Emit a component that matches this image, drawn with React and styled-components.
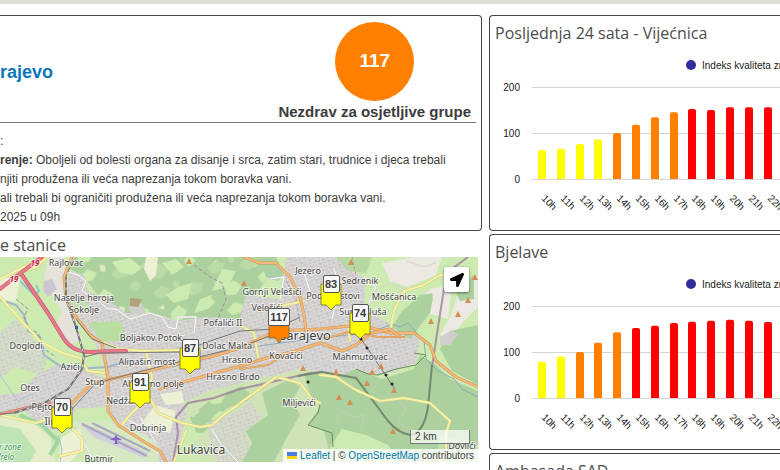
import React from 'react';
import styled, { createGlobalStyle } from 'styled-components';
import { FaLocationArrow } from 'react-icons/fa';

const GlobalStyle = createGlobalStyle`
    * {
        box-sizing: border-box;
    }

    body {
        margin: 0;
        background: white;
        color: #3c3c3c;
        font-family: 'Liberation Sans', Arial, sans-serif;
        overflow: hidden;
    }
`;

const Page = styled.div`
    height: 100vh;
    overflow: hidden;
`;

const TopStrip = styled.header`
    height: 4px;
    background-color: #e0e0d8;
`;

const Columns = styled.main`
    display: grid;
    grid-template-columns: minmax(0, 482fr) minmax(0, 291fr);
    column-gap: 7px;
    margin-top: 11px;
`;

const Column = styled.div`
    display: flex;
    flex-flow: column nowrap;
    gap: 3px;
`;

const Card = styled.section`
    min-height: 216px;
    border: 1px solid #444;
    overflow: hidden;
    border-radius: ${props => props.$side === 'left' ? '0 4px 4px 0' : '4px 0 0 4px'};
    ${props => props.$side === 'left' ? 'border-left: none;' : 'border-right: none;'}
`;

const CardTitle = styled.h2`
    margin: 0;
    padding-left: 5px;
    font-family: 'Open Sans', 'Noto Sans', sans-serif;
    font-size: 16px;
    font-weight: 400;
    line-height: 34px;
    color: #4c4c4c;
    white-space: nowrap;
`;

const Summary = styled.div`
    display: flex;
    justify-content: space-between;
    align-items: center;
    height: 107px;
    margin-right: 5px;
    padding: 6px 5px 0 0;
    border-bottom: 1px solid #777;
`;

const City = styled.h1`
    margin: 0;
    font-size: 18px;
    line-height: 20px;
    color: #0a76bd;
`;

const Rating = styled.div`
    display: flex;
    flex-flow: column nowrap;
    align-items: center;
    font-size: 15px;
    font-weight: bold;
    line-height: 22px;
`;

const IndexCircle = styled.div`
    display: flex;
    justify-content: center;
    align-items: center;
    width: 79px;
    height: 79px;
    border-radius: 50%;
    background-color: #ff8000;
    color: white;
    font-size: 19px;
`;

const Advice = styled.div`
    padding-top: 9px;
    font-size: 12px;
    line-height: 19px;
    white-space: nowrap;

    p {
        margin: 0;
    }
`;

const Stations = styled.section`
    margin-right: 4px;
`;

const StationsTitle = styled(CardTitle)`
    padding-left: 0;
    line-height: 23px;
`;

const MapBox = styled.div`
    position: relative;
    height: 205px;
    overflow: hidden;
    background-color: #c9e6b0;
`;

const MapDrawing = styled.svg`
    display: block;
    width: 100%;
    height: 100%;

    text {
        font-family: 'Noto Sans', sans-serif;
        font-size: 9px;
        fill: #444;
        stroke: rgba(255, 255, 255, 0.6);
        stroke-width: 2px;
        paint-order: stroke;
        text-anchor: middle;
    }

    .town {
        font-size: 10px;
    }

    .city {
        font-size: 12px;
    }

    .capital {
        font-size: 13px;
    }

    .shield {
        font-size: 8px;
        font-style: italic;
        font-weight: bold;
        fill: #c2304e;
    }

    .reserve {
        font-size: 8px;
        font-style: italic;
        fill: #3b9650;
    }
`;

const Pin = styled.button`
    position: absolute;
    left: ${props => props.$x}px;
    top: ${props => props.$y}px;
    display: flex;
    justify-content: center;
    align-items: flex-start;
    width: 24px;
    height: 36px;
    margin: -36px 0 0 -12px;
    padding: 0;
    border: none;
    background: none;
    cursor: pointer;

    svg {
        position: absolute;
        left: 1px;
        bottom: 0;
    }

    span {
        position: relative;
        min-width: 17px;
        height: 18px;
        padding: 0 1px;
        border: 1px solid #555;
        border-radius: 2px;
        background-color: #f8f8f8;
        color: #3c3c3c;
        font: bold 11px/16px 'Liberation Sans', Arial, sans-serif;
    }
`;

const LocateButton = styled.button`
    position: absolute;
    top: 10px;
    right: 9px;
    display: flex;
    justify-content: center;
    align-items: center;
    width: 25px;
    height: 25px;
    padding: 0;
    border: none;
    border-radius: 2px;
    background-color: white;
    box-shadow: 0 1px 3px rgba(0, 0, 0, 0.5);
    color: black;
    font-size: 14px;
`;

const Scale = styled.div`
    position: absolute;
    right: 8px;
    bottom: 18px;
    width: 60px;
    height: 14px;
    padding-left: 4px;
    border: 1px solid #777;
    border-top: none;
    background-color: rgba(255, 255, 255, 0.7);
    font-size: 10px;
    line-height: 13px;
`;

const Attribution = styled.div`
    position: absolute;
    right: 0;
    bottom: 0;
    padding: 0 4px;
    background-color: rgba(255, 255, 255, 0.8);
    font-size: 10px;
    line-height: 13px;
    white-space: nowrap;

    a {
        color: #0078a8;
        text-decoration: none;
    }
`;

const ChartDrawing = styled.svg`
    display: block;
    width: 340px;
    height: 178px;

    text {
        font-family: 'Liberation Sans', Arial, sans-serif;
        font-size: 10px;
        fill: #222;
    }
`;

const HOURS = ['10h', '11h', '12h', '13h', '14h', '15h', '16h', '17h', '18h', '19h', '20h', '21h', '22h'];

const charts = [
    { title: 'Posljednja 24 sata - Vijećnica', values: [63, 66, 76, 86, 100, 118, 134, 145, 152, 150, 156, 156, 156] },
    { title: 'Bjelave', values: [79, 90, 100, 120, 143, 152, 157, 163, 166, 168, 170, 168, 165] },
    { title: 'Ambasada SAD', values: [] },
];

const stations = [
    { x: 62, y: 177, value: 70 },
    { x: 140, y: 152, value: 91 },
    { x: 190, y: 118, value: 87 },
    { x: 279, y: 87, value: 117 },
    { x: 331, y: 54, value: 83 },
    { x: 360, y: 83, value: 74 },
];

const labels = [
    [66, 9, 'Rajlovac'],
    [84, 44, 'Naselje heroja'],
    [84, 56, 'Sokolje'],
    [26, 92, 'Doglodi'],
    [151, 84, 'Boljakov Potok'],
    [70, 113, 'Azići'],
    [147, 108, 'Alipašin most'],
    [95, 128, 'Stup'],
    [30, 134, 'Otes'],
    [153, 130, 'Alipašino polje'],
    [45, 153, 'Pejton'],
    [57, 168, 'Ilidža', 'town'],
    [126, 147, 'Nedžarići'],
    [148, 174, 'Dobrinja'],
    [99, 205, 'Butmir'],
    [201, 197, 'Lukavica', 'city'],
    [223, 69, 'Pofalići II'],
    [227, 92, 'Dolac Malta'],
    [237, 106, 'Hrasno'],
    [233, 123, 'Hrasno Brdo'],
    [272, 38, 'Gornji Velešići'],
    [267, 54, 'Velešići'],
    [308, 17, 'Jezero'],
    [360, 27, 'Sedrenik'],
    [333, 42, 'Pod Hrastovi'],
    [394, 43, 'Mošćanica'],
    [363, 58, 'Sumbuluša'],
    [305, 83, 'Sarajevo', 'capital'],
    [286, 102, 'Kovačići'],
    [360, 103, 'Mahmutovac'],
    [299, 149, 'Miljevići'],
    [462, 192, 'Dovlići'],
    [35, 9, '19', 'shield'],
    [14, 25, '19', 'shield'],
    [8, 193, 'er zone', 'reserve'],
    [5, 203, 'Vrelo', 'reserve'],
];

const peaks = [
    [189, 4], [244, 26], [351, 5], [431, 64], [458, 57], [468, 43], [475, 20],
    [303, 111], [336, 115], [372, 115], [381, 109], [367, 126], [394, 133],
    [339, 140], [350, 145], [393, 174],
];

function barColor(value) {
    if (value < 100) return '#ffff00';
    if (value < 150) return '#ff8000';
    return '#ff0000';
}

const Road = ({ d, color, edge, width }) => (
    <g fill="none" strokeLinejoin="round" strokeLinecap="round">
        <path d={d} stroke={edge} strokeWidth={width + 1} />
        <path d={d} stroke={color} strokeWidth={width} />
    </g>
);

const primary = { color: '#f2b97a', edge: '#d4924f', width: 2 };
const secondary = { color: '#f4f3a8', edge: '#d3cd86', width: 2 };
const motorway = { color: '#e5798c', edge: '#c84f6b', width: 3 };
const minor = { color: '#ffffff', edge: '#cfcfcf', width: 1 };

const CityMap = () => (
    <MapDrawing viewBox="0 0 478 205" preserveAspectRatio="xMinYMin slice" role="img" aria-label="Sarajevo">
        <defs>
            <pattern id="streets" width="9" height="7" patternUnits="userSpaceOnUse" patternTransform="rotate(-18)">
                <rect width="9" height="7" fill="#cfcccb" />
                <path d="M0 2H9M0 6L4 5L9 6M3 0V5M7 2V7" stroke="#dedcdb" fill="none" />
                <path d="M1 4h1M5 4h1M5 1h2" stroke="#bfb9b7" fill="none" />
            </pattern>
            <pattern id="woods" width="60" height="46" patternUnits="userSpaceOnUse" patternTransform="rotate(-25)">
                <rect width="60" height="46" fill="#add19e" />
                <path d="M3 6L14 2L21 9L15 14L6 13ZM33 17L44 12L53 18L48 25L38 24ZM11 31L21 27L27 36L18 42L9 38ZM45 35L53 32L56 40L47 43Z" fill="#cdebb0" />
                <path d="M27 3L32 6L29 12L25 9ZM2 22L8 20L7 25Z" fill="#dfe9c0" />
            </pattern>
        </defs>

        {/* land cover */}
        <rect width="478" height="205" fill="#cdebb0" />
        <path d="M74 0H260L270 18L252 42L244 62L205 64L180 72L158 60L132 62L110 48L96 36L84 20L70 12Z" fill="url(#woods)" />
        <path d="M100 0H160L190 20L225 0H262L245 22L214 28L196 48L168 44L140 48L118 30Z" fill="#add19e" opacity="0.6" />
        <path d="M112 5L130 1L142 11L132 18L119 15ZM178 30L192 26L188 42L174 46L166 38ZM222 12L236 14L228 30L212 34ZM200 42L212 38L208 52L194 56ZM162 6L176 2L184 10L172 18Z" fill="#cdebb0" />
        <path d="M146 0H158L156 18L150 24L144 12Z" fill="#eef0d5" />
        <path d="M128 50L140 44L146 54L136 62Z" fill="#cfcecc" />
        <path d="M130 41L142 42L138 50L130 49Z" fill="#b3a17b" />
        <path d="M48 0H64L66 30L72 60L82 82L70 88L56 68L62 55L44 22Z" fill="#e5e2dc" />
        <path d="M44 24L52 22L57 32L48 40L43 33Z" fill="#cbc7d2" />
        <path d="M0 20L20 22L16 45L0 42Z" fill="#eef0d5" />
        <path d="M0 75L16 62L30 78L48 100L42 118L16 110L0 122Z" fill="url(#streets)" opacity="0.7" />
        <path d="M36 118L58 107L85 110L105 122L106 150L76 152L60 175L38 168L22 150L0 156V138L20 136Z" fill="url(#streets)" />
        <path d="M70 14L84 18L88 34L106 42L126 56L160 58L178 64L206 60L240 62L246 38L282 42L286 0H336L352 14L366 22L364 50L388 66L420 82L416 106L394 115L362 120L338 116L300 112L250 126L210 141L186 160L176 205H158L150 190L122 176L108 150L104 108L96 88L82 66L70 52L66 32Z" fill="url(#streets)" />
        <path d="M68 42L82 40L92 52L84 58L72 54Z" fill="#c3dfae" opacity="0.8" />
        <path d="M88 66L120 64L128 84L102 84Z" fill="#b8dfa0" />
        <path d="M258 0H276L284 18L278 24L266 20Z" fill="#abd0a5" />
        <path d="M110 164L146 178L160 190L158 205H100L82 190L70 178L74 164Z" fill="#d7e9c2" />
        <path d="M78 164L98 172L148 196L144 201L94 180Z" fill="#d0cfdd" />
        <path d="M82 167L147 199M92 166L150 194" stroke="#aaa7be" strokeWidth="2" />
        <path d="M62 180L80 171L84 190L70 205H58Z" fill="#eef0d5" />
        <path d="M0 160L28 162L50 180L55 205H0Z" fill="#e4edc9" />
        <path d="M0 168L20 172L36 194L30 205H0Z" fill="#bee4b5" />
        <path d="M20 158L42 168L58 184L50 198" fill="none" stroke="#94d0a0" strokeWidth="4" opacity="0.8" />
        <path d="M155 148L176 154L170 176L140 168ZM160 137L182 134L184 146L166 148Z" fill="#eef0d5" />
        <path d="M182 146L208 134L246 125L300 112L340 118L330 150L320 172L346 188L330 205H205L194 186L214 162L190 166Z" fill="#cfe3b6" />
        <path d="M190 160L214 140L250 126L248 144L226 152L210 170L198 180Z" fill="url(#woods)" />
        <path d="M206 166L238 154L250 144L262 162L246 176L250 192L240 205H218L212 190Z" fill="url(#streets)" opacity="0.7" />
        <path d="M262 136L290 122L300 130L292 144L300 158L286 182L274 205H242L252 186L246 174L268 158Z" fill="#add19e" />
        <path d="M304 116L340 119L356 112L382 122L414 112L420 98L436 108L450 122L478 134V190L440 205H332L324 174L308 168L320 150L310 138Z" fill="#add19e" />
        <path d="M342 172L366 178L388 188L398 205H334L330 190Z" fill="#cdebb0" />
        <path d="M440 178L478 188V205H436Z" fill="#c1deb0" />
        <path d="M382 6L414 0H442L436 18L408 30L390 24ZM430 32L452 28L448 62L428 56L416 64L402 56Z" fill="#ece9e2" />
        <path d="M462 22L478 18V50L464 64L448 84L440 78L452 56Z" fill="#ece9e2" />
        <path d="M336 0H372L366 16L348 14Z" fill="#add19e" opacity="0.7" />
        <path d="M402 54L420 38L434 36L430 56L410 82L392 70ZM454 32L474 18V42L460 44ZM450 74L478 68V128L452 114L440 92Z" fill="#add19e" />
        <path d="M432 34L450 30L446 58L434 54Z" fill="#ece9e2" />
        <path d="M440 80L452 73L458 78L450 88L440 88Z" fill="#cfcecc" />
        <path d="M390 26L404 32L390 40L374 34ZM406 4L424 10L436 6" fill="none" stroke="#d7d3cd" />

        {/* water and admin borders */}
        <g fill="none">
            <path d="M0 43L16 48L24 58L28 74L40 80L44 98L60 109L90 111L108 110L132 103" stroke="#9fb5c8" strokeWidth="2" />
            <path d="M16 42L28 52L24 60L30 72L38 76L44 92L56 100" stroke="#9c8fac" strokeDasharray="4 2" />
            <path d="M20 24L34 38L39 34L36 28" stroke="#8dc7cc" strokeWidth="2" />
            <path d="M0 118L8 130L18 144L30 138M58 178L62 192L60 205" stroke="#9fc6d8" />
            <path d="M172 110L200 103L240 92L280 86L330 80L370 76L392 67L400 70L408 66L424 84L426 102L438 114L454 122L462 132L478 140" stroke="#8aaab8" strokeWidth="1" />
            <path d="M194 8L210 20L222 26L226 42L218 62" stroke="#a689a8" strokeDasharray="4 2" />
            <path d="M173 205L178 176L176 160L188 146L214 141L240 132L276 124L310 116L322 115" stroke="#9d7f9c" strokeWidth="2" opacity="0.8" />
            <path d="M468 0L452 12L444 32L438 70L432 110" stroke="#9d7f9c" strokeWidth="2" opacity="0.8" />
            <path d="M352 0L356 18L350 28M286 24L296 42L300 66" stroke="#b193b0" strokeDasharray="3 2" />
            <path d="M432 108Q430 130 428 150Q424 176 410 178Q398 176 388 164L356 121L322 115L298 119" stroke="#748a6e" strokeWidth="2" />
            <path d="M414 96L426 98L416 108L396 112L378 118L368 117L356 112M320 148L318 156L308 168L332 176L333 190" stroke="#65905b" />
            <path d="M334 168L342 154L354 160L364 158L362 172M378 126L370 134L388 142M398 144L406 152L398 164L410 176" stroke="#c3ccb9" />
        </g>

        {/* roads */}
        <Road {...minor} d="M68 15L78 18L86 24L82 34L96 42L108 52L116 52L130 62L150 56L162 60L168 70L176 72L178 60L196 60L194 76" />
        <Road {...minor} d="M270 22L284 20L280 42M334 12L340 30L332 62M212 172L220 186L238 205M126 162L158 178" />
        <Road {...minor} d="M84 186L92 200M140 160L156 186M364 20L376 30L368 48M304 16L310 34" />
        <Road {...secondary} d="M0 40L40 84L62 96L80 101L88 114L104 116M0 22L16 14L44 0M48 0L34 11L22 14M0 158L36 166L54 160" />
        <Road {...secondary} d="M98 83L118 92L145 94L180 93L202 92M146 94L152 120L148 138L158 156L182 166L200 170L212 168L226 156L258 134L276 120L300 126L312 142L320 146" />
        <Road {...secondary} d="M73 172L82 182L82 194L60 199M138 150L130 158L120 170M258 54L304 44M240 146L276 120M186 174L174 205" />
        <Road {...secondary} d="M320 118L336 120L354 132L380 144L404 141L430 146L450 164L446 176L446 205M390 74L394 54L404 34L424 28L440 18L458 18M240 68L254 76L258 100M348 68L350 84" />
        <Road {...primary} d="M72 0L64 20L66 42L76 60L90 78L102 86L108 120L108 154L118 168L146 186L160 194L166 205" />
        <Road {...primary} d="M66 152L92 126L140 116L180 106L210 100L240 91L276 74L320 72L360 68L390 76L414 76L430 88L436 104L456 120L478 130" />
        <Road {...primary} color="#e2968a" edge="#c67c70" d="M0 157L30 150L50 146" />
        <Road {...primary} d="M160 132L208 118L244 108L270 100L296 94L320 86L342 94L356 88L372 76L390 72L400 80M244 0L260 6L276 6L290 20L300 40L304 58L306 74" />
        <Road {...primary} width={1} d="M240 112L268 108L284 98M324 82L352 74L378 80L404 80" />
        <Road {...motorway} d="M0 32L18 18L42 0M22 18L48 56L64 82Q72 94 88 95L126 94" />

        {/* railway and cable car */}
        <g fill="none">
            <path d="M74 0L66 20L66 42L76 70L84 98L82 112L68 132L44 146L14 156L0 157M76 62L92 82L116 91M84 100L100 96L180 95L216 82L240 74L276 72L300 60M72 152L96 126L150 112L240 90L278 76" stroke="#777" strokeWidth="1" />
            <path d="M66 20L66 42L76 70L84 98L82 112L68 132L44 146L14 156" stroke="#777" strokeWidth="2" />
            <path d="M74 0L66 20L66 42L76 70L84 98L82 112L68 132L44 146L14 156" stroke="#ddd" strokeDasharray="3 5" />
            <path d="M361 82L395 132" stroke="#777" />
        </g>
        <g fill="#222">
            <rect x="75" y="69" width="3" height="3" fill="#3d52a8" />
            <circle cx="361" cy="82" r="1.5" />
            <circle cx="367" cy="91" r="1.5" />
            <circle cx="386" cy="118" r="1.5" />
            <circle cx="392" cy="127" r="1.5" />
            <circle cx="308" cy="125" r="1.5" />
        </g>
        <path d="M116 177L117 180L122 183L117 183L117 186L119 187H113L115 186L115 183L110 183L115 180Z" fill="#8461c4" />

        {peaks.map(([x, y]) => (
            <path key={`${x}-${y}`} d={`M${x - 3} ${y + 3}L${x} ${y - 3}L${x + 3} ${y + 3}Z`} fill="#d08f55" />
        ))}
        {labels.map(([x, y, name, kind]) => (
            <text key={name + x} x={x} y={y} className={kind}>{name}</text>
        ))}
    </MapDrawing>
);

const Station = ({ x, y, value }) => (
    <Pin type="button" $x={x} $y={y}>
        <svg width="22" height="28" viewBox="0 0 22 28" aria-hidden="true">
            <path
                d={value > 100 ? 'M1 7H21V22H15L11 27L7 22H1Z' : 'M1 1H21V22H16L11 27L6 22H1Z'}
                fill={barColor(value)}
                stroke="#6b6b3c"
                strokeOpacity="0.8"
            />
        </svg>
        <span>{value}</span>
    </Pin>
);

const HourChart = ({ title, values }) => (
    <ChartDrawing viewBox="0 0 340 178" role="img" aria-label={title}>
        <circle cx="201" cy="15" r="5" fill="#332c9c" />
        <text x="212" y="19">Indeks kvaliteta zraka</text>
        {[200, 100, 0].map((tick, i) => (
            <g key={tick}>
                <rect x="42" y={37 + i * 46} width="298" height="1" fill="#d4d4d4" />
                <text x="30" y={41 + i * 46} textAnchor="end">{tick}</text>
            </g>
        ))}
        {values.map((value, i) => {
            const x = Math.round(48 + i * 18.8);
            const h = value * 0.46;
            return (
                <g key={HOURS[i]}>
                    <path
                        d={`M${x} 129V${131 - h}q0 -2 2 -2h4q2 0 2 2V129Z`}
                        fill={barColor(value)}
                    />
                    <text transform={`translate(${x + 3} 149) rotate(45)`}>{HOURS[i]}</text>
                </g>
            );
        })}
    </ChartDrawing>
);

const App = () => (
    <Page>
        <GlobalStyle />
        <TopStrip />
        <Columns>
            <Column>
                <Card $side="left">
                    <Summary>
                        <City>rajevo</City>
                        <Rating>
                            <IndexCircle>117</IndexCircle>
                            Nezdrav za osjetljive grupe
                        </Rating>
                    </Summary>
                    <Advice>
                        <p>:</p>
                        <p><b>renje:</b> Oboljeli od bolesti organa za disanje i srca, zatim stari, trudnice i djeca trebali</p>
                        <p>njiti produžena ili veća naprezanja tokom boravka vani.</p>
                        <p>ali trebali bi ograničiti produžena ili veća naprezanja tokom boravka vani.</p>
                        <p>2025 u 09h</p>
                    </Advice>
                </Card>
                <Stations>
                    <StationsTitle>e stanice</StationsTitle>
                    <MapBox>
                        <CityMap />
                        {stations.map(station => <Station key={station.value} {...station} />)}
                        <LocateButton type="button" aria-label="Moja lokacija"><FaLocationArrow /></LocateButton>
                        <Scale>2 km</Scale>
                        <Attribution>
                            <svg width="10" height="7" viewBox="0 0 10 7" aria-hidden="true">
                                <path d="M0 0h10v4H0z" fill="#4c7be1" />
                                <path d="M0 4h10v3H0z" fill="#ffd500" />
                            </svg>
                            {' '}<a href="#leaflet">Leaflet</a> | © <a href="#osm">OpenStreetMap</a> contributors
                        </Attribution>
                    </MapBox>
                </Stations>
            </Column>
            <Column>
                {charts.map(chart => (
                    <Card key={chart.title} $side="right">
                        <CardTitle>{chart.title}</CardTitle>
                        <HourChart {...chart} />
                    </Card>
                ))}
            </Column>
        </Columns>
    </Page>
);

export default App;
